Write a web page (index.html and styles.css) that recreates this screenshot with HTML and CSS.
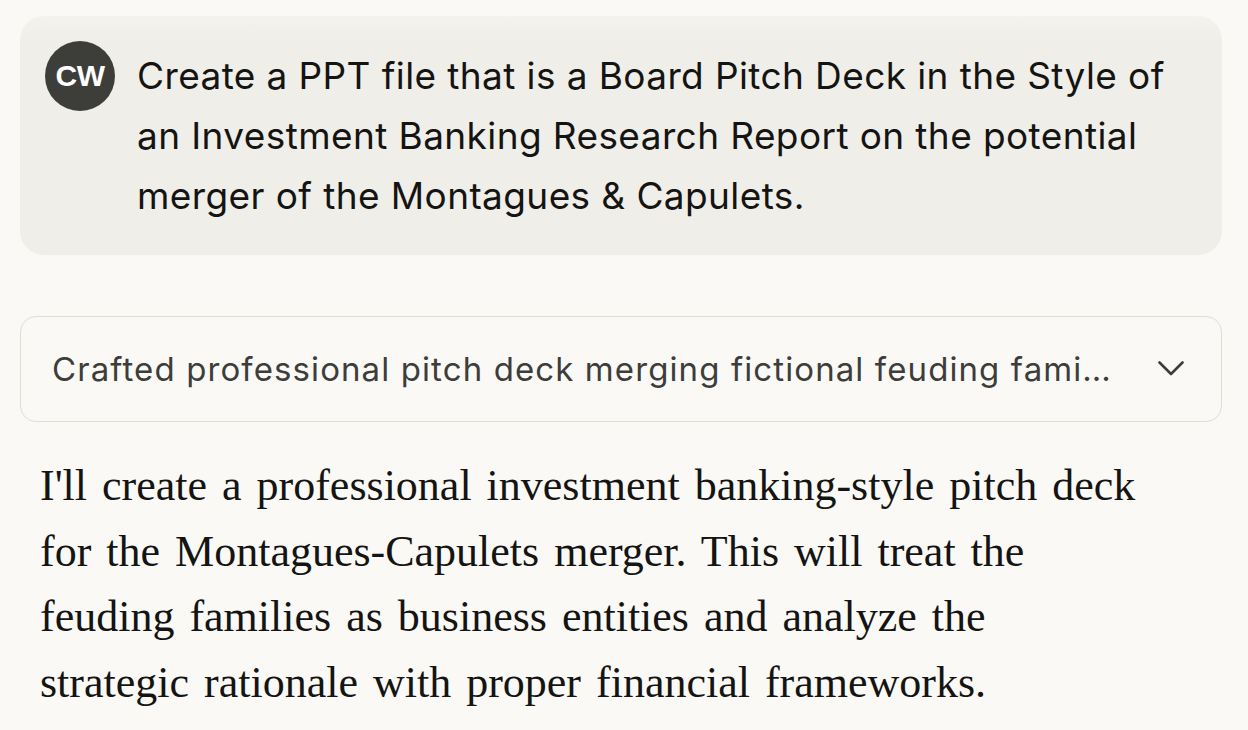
FILE: index.html
```html
<!DOCTYPE html>
<html>
<head>
<meta charset="utf-8">
<link rel="stylesheet" href="styles.css">
</head>
<body>
<div class="page">
  <div class="user-msg">
    <div class="avatar">CW</div>
    <div class="user-text">Create a PPT file that is a Board Pitch Deck in the Style of an Investment Banking Research Report on the potential merger of the Montagues &amp; Capulets.</div>
  </div>
  <div class="thinking">
    <span class="thinking-text">Crafted professional pitch deck merging fictional feuding fami…</span>
    <svg class="chev" width="26" height="16" viewBox="0 0 26 16"><path d="M1.5 1.5 L13 13 L24.5 1.5" fill="none" stroke="#3d3d3a" stroke-width="2.6" stroke-linecap="round" stroke-linejoin="round"/></svg>
  </div>
  <p class="reply">I'll create a professional investment banking-style pitch deck for the Montagues-Capulets merger. This will treat the feuding families as business entities and analyze the strategic rationale with proper financial frameworks.</p>
</div>
</body>
</html>
```
FILE: styles.css
```css
html, body {
  margin: 0;
  padding: 0;
  background: #faf9f6;
}
body {
  width: 1248px;
  height: 730px;
  overflow: hidden;
}
.page {
  padding: 16px 26px 0 20px;
  display: flex;
  flex-direction: column;
}
.user-msg {
  display: flex;
  align-items: flex-start;
  gap: 22px;
  background: linear-gradient(to bottom, #f4f2ed 0px, #f0eee8 30px, #f0eee8 100%);
  border-radius: 24px;
  padding: 25px 25px 29px 25px;
}
.avatar {
  flex: 0 0 70px;
  width: 70px;
  height: 70px;
  border-radius: 50%;
  background: #3d3d3a;
  color: #ffffff;
  font-family: "Liberation Sans", Arial, sans-serif;
  font-weight: 700;
  font-size: 30px;
  letter-spacing: -0.5px;
  display: flex;
  align-items: center;
  justify-content: center;
}
.user-text {
  margin-top: 5px;
  font-family: "Inter", "Noto Sans", sans-serif;
  font-size: 37px;
  line-height: 60px;
  color: #141413;
  letter-spacing: 0.4px;
  max-width: 1045px;
}
.thinking {
  margin-top: 61px;
  height: 104px;
  border: 1px solid #e0ddd5;
  border-radius: 16px;
  display: flex;
  align-items: center;
  justify-content: space-between;
  padding: 0 37px 0 31px;
}
.thinking-text {
  font-family: "Inter", "Noto Sans", sans-serif;
  font-size: 33px;
  color: #3d3d3a;
  letter-spacing: 1.1px;
}
.chev {
  display: block;
}
.reply {
  margin: 31px 0 0 20px;
  font-family: "Liberation Serif", "Times New Roman", serif;
  font-size: 44px;
  word-spacing: 4px;
  line-height: 65.7px;
  color: #141413;
  width: 1105px;
}
```
